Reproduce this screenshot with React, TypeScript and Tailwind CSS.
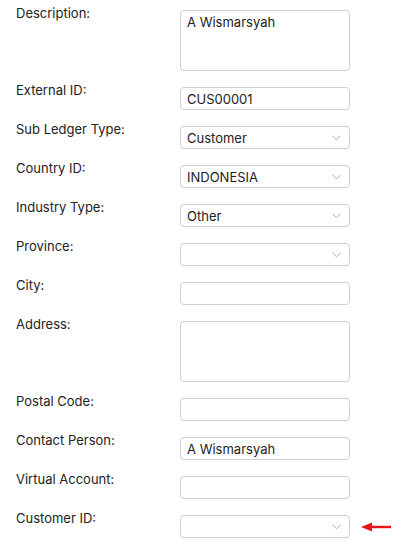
import React from "react";

type Field = { label: string; kind: "input" | "select" | "textarea"; value?: string };

const fields: Field[] = [
  { label: "Description:", kind: "textarea", value: "A Wismarsyah" },
  { label: "External ID:", kind: "input", value: "CUS00001" },
  { label: "Sub Ledger Type:", kind: "select", value: "Customer" },
  { label: "Country ID:", kind: "select", value: "INDONESIA" },
  { label: "Industry Type:", kind: "select", value: "Other" },
  { label: "Province:", kind: "select" },
  { label: "City:", kind: "input" },
  { label: "Address:", kind: "textarea" },
  { label: "Postal Code:", kind: "input" },
  { label: "Contact Person:", kind: "input", value: "A Wismarsyah" },
  { label: "Virtual Account:", kind: "input" },
  { label: "Customer ID:", kind: "select" },
];

const Chevron = () => (
  <svg width="9" height="6" viewBox="0 0 9 6" className="absolute right-[9px] top-1/2 -translate-y-1/2">
    <path d="M0.5 0.8 L4.5 4.8 L8.5 0.8" fill="none" stroke="#a8a8a8" strokeWidth="1" />
  </svg>
);

export default function App() {
  return (
    <div className="w-[410px] h-[546px] bg-white overflow-hidden pt-[10px] text-[13px] text-[#222]" style={{ fontFamily: "Inter, 'Noto Sans', sans-serif" }}>
      <div className="flex flex-col gap-4">
        {fields.map((f, i) => (
          <div key={i} className="flex items-start">
            <label className="w-[180px] pl-4 -mt-[6px] leading-[18px] text-[#222]">{f.label}</label>
            <div className="relative w-[170px]">
              {f.kind === "textarea" ? (
                <div className="h-[61px] border border-[#cfcfcf] rounded-[4px] px-[6px] pt-[2px] leading-[18px]">{f.value}</div>
              ) : (
                <div className="h-[23px] border border-[#cfcfcf] rounded-[4px] px-[6px] pt-[1px] flex items-center leading-none">{f.value}</div>
              )}
              {f.kind === "select" && <Chevron />}
              {i === fields.length - 1 && (
                <svg width="30" height="10" viewBox="0 0 30 10" className="absolute left-[181px] top-1/2 -translate-y-1/2">
                  <path d="M0 5 L11 0.5 L11 9.5 Z" fill="#e8141b" />
                  <rect x="10" y="3.8" width="20" height="2.4" fill="#e8141b" />
                </svg>
              )}
            </div>
          </div>
        ))}
      </div>
    </div>
  );
}
